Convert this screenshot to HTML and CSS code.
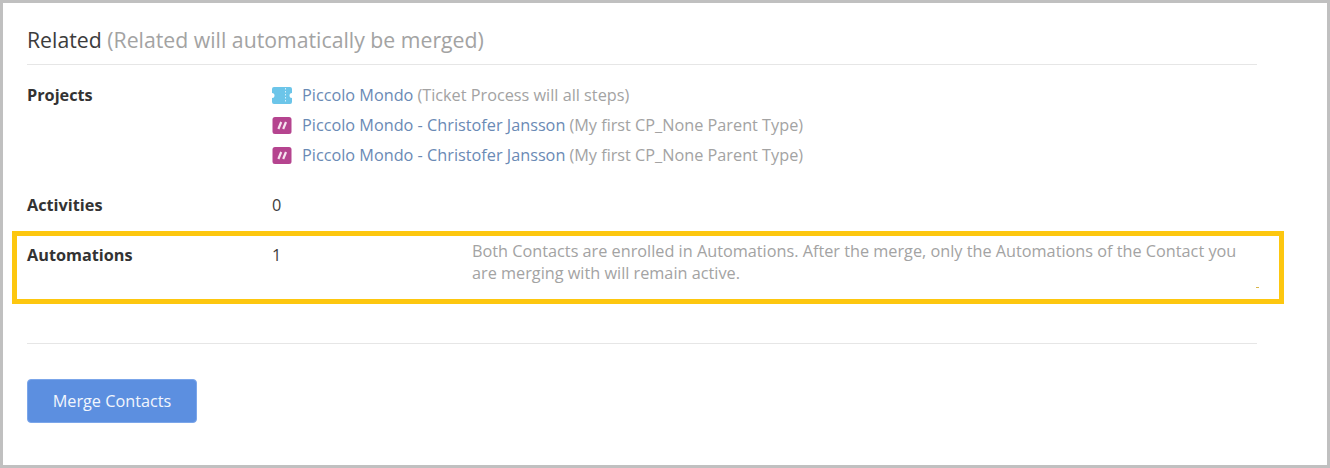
FILE: index.html
```html
<!DOCTYPE html>
<html lang="en">
<head>
  <meta charset="UTF-8" />
  <title>Merge Contacts</title>
  <link rel="stylesheet" href="styles.css">
</head>
<body>
  <div class="frame">
    <div class="content">
      <h2 class="title">Related <span class="muted">(Related will automatically be merged)</span></h2>

      <div class="row row-projects">
        <div class="label">Projects</div>
        <div class="projects">
          <div class="project">
            <svg class="icon" viewBox="0 0 20 17">
              <path d="M2 0h16a2 2 0 0 1 2 2v4a2.5 2.5 0 0 0 0 5v4a2 2 0 0 1-2 2H2a2 2 0 0 1-2-2v-4a2.5 2.5 0 0 0 0-5V2a2 2 0 0 1 2-2z" fill="#6cc5e9"/>
              <path d="M13.5 1v15" stroke="#d4eff9" stroke-width="1" stroke-dasharray="1.5 1.5"/>
            </svg>
            <a class="link">Piccolo Mondo</a>
            <span class="muted">(Ticket Process will all steps)</span>
          </div>
          <div class="project">
            <svg class="icon" viewBox="0 0 20 17">
              <rect x="0.5" width="19" height="17" rx="2.5" fill="#b5448f"/>
              <path d="M9.2 5 6.4 12M14 5l-2.8 7" stroke="#f6e3ef" stroke-width="2.2" fill="none"/>
            </svg>
            <a class="link">Piccolo Mondo - Christofer Jansson</a>
            <span class="muted">(My first CP_None Parent Type)</span>
          </div>
          <div class="project">
            <svg class="icon" viewBox="0 0 20 17">
              <rect x="0.5" width="19" height="17" rx="2.5" fill="#b5448f"/>
              <path d="M9.2 5 6.4 12M14 5l-2.8 7" stroke="#f6e3ef" stroke-width="2.2" fill="none"/>
            </svg>
            <a class="link">Piccolo Mondo - Christofer Jansson</a>
            <span class="muted">(My first CP_None Parent Type)</span>
          </div>
        </div>
      </div>

      <div class="row row-activities">
        <div class="label">Activities</div>
        <div class="value">0</div>
      </div>

      <div class="row row-automations">
        <div class="label">Automations</div>
        <div class="value value-narrow">1</div>
        <div class="note muted">Both Contacts are enrolled in Automations. After the merge, only the Automations of the Contact you are merging with will remain active.</div>
        <span class="speck"></span>
      </div>

      <div class="actions">
        <button class="merge">Merge Contacts</button>
      </div>
    </div>
  </div>
</body>
</html>
```

FILE: styles.css
```css
:root {
  --text: #3c3c3c;
  --muted: #a3a3a3;
  --link: #6a8ab5;
  --line: #e6e6e6;
  --yellow: #fdc70f;
}

body {
  margin: 0;
  background: #fff;
  font-family: "Open Sans", sans-serif;
  font-size: 16.25px;
  line-height: 22px;
  color: var(--text);
}

.frame {
  box-sizing: border-box;
  height: 468px;
  border: 3px solid #c0c0c0;
  background: #fff;
}

.content {
  width: 1230px;
  margin-left: 24px;
}

.title {
  margin: 0;
  padding: 22px 0 10px;
  height: 29px;
  border-bottom: 1px solid var(--line);
  font-size: 21.25px;
  font-weight: 400;
  line-height: 29px;
}

.muted {
  color: var(--muted);
}

.row {
  display: flex;
}

.label {
  width: 245px;
  flex: none;
  font-weight: 700;
  color: #333;
}

.row-projects {
  padding-top: 19px;
}

.project {
  display: flex;
  align-items: center;
  gap: 4px;
  height: 30px;
  white-space: nowrap;
}

.projects {
  margin-top: -4px;
}

.icon {
  width: 20px;
  height: 17px;
  margin-right: 6px;
}

.link {
  color: var(--link);
}

.row-activities {
  padding-top: 24px;
}

.row-automations {
  position: relative;
  box-sizing: border-box;
  height: 73px;
  margin: 15px -27px 0 -15px;
  padding: 8px 22px 0 10px;
  border: 5px solid var(--yellow);
}

.value-narrow {
  width: 200px;
  flex: none;
}

.note {
  width: 770px;
  margin-top: -4px;
}

.speck {
  position: absolute;
  right: 20px;
  bottom: 11px;
  width: 3px;
  height: 1px;
  background: #d9b64a;
}

.actions {
  margin-top: 39px;
  padding-top: 35px;
  border-top: 1px solid var(--line);
}

.merge {
  display: block;
  width: 170px;
  height: 44px;
  border: 1px solid #7ba6ea;
  border-radius: 4px;
  background: #5c8fe0;
  color: #f2f6fd;
  font-family: inherit;
  font-size: 16.25px;
}
```
